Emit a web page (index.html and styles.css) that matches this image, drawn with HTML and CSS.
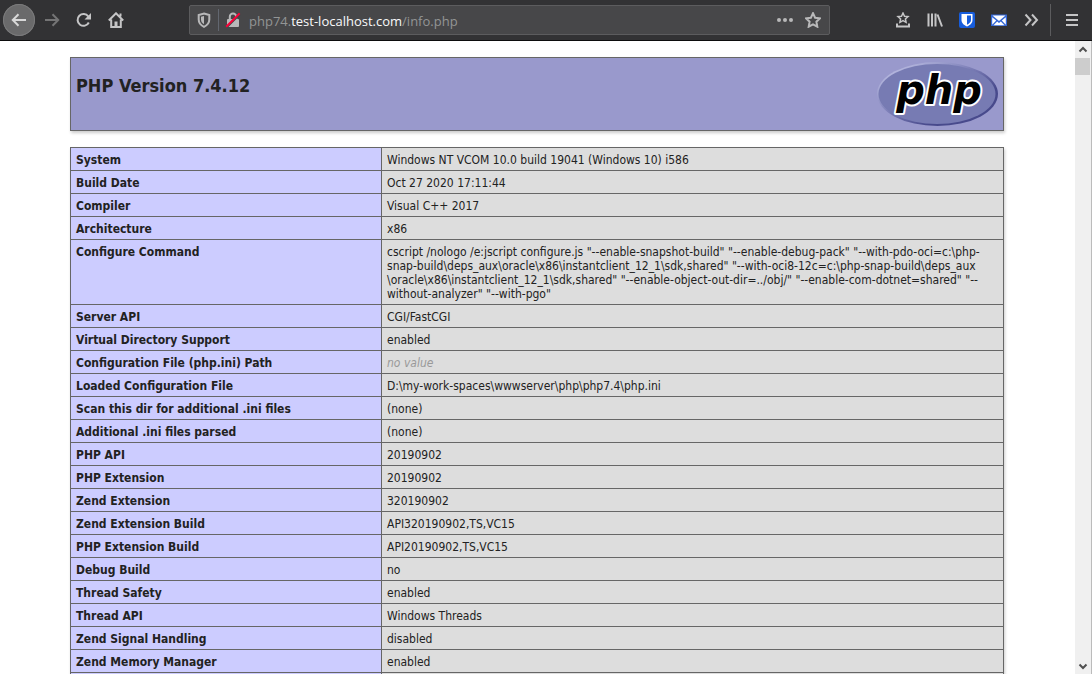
FILE: index.html
```html
<!DOCTYPE html>
<html lang="en">
<head>
<meta charset="utf-8">
<title>phpinfo()</title>
<link rel="stylesheet" href="styles.css">
</head>
<body>
<header class="toolbar">
  <nav class="nav-buttons">
    <button class="tool back" aria-label="Back"><svg viewBox="0 0 16 16"><path d="M15 8H2M7.500 2.300 1.800 8l5.700 5.700"/></svg></button>
    <button class="tool forward" aria-label="Forward"><svg viewBox="0 0 16 16"><path d="M1 8h13M8.500 2.300 14.200 8l-5.700 5.700"/></svg></button>
    <button class="tool" aria-label="Reload"><svg viewBox="0 0 16 16"><path d="M12.800 10.500A5.900 5.900 0 1 1 12.300 4.500"/><path class="solid" d="M15 1v6.500H8.500z"/></svg></button>
    <button class="tool" aria-label="Home"><svg viewBox="0 0 16 16"><path d="M.800 8.500 8 1.300l7.200 7.200M3.200 7.500V15h9.600V7.500M12.500 1.500v3"/><path class="solid" d="M6.500 15V9.500h3V15z"/></svg></button>
  </nav>
  <div class="urlbar">
    <button class="tool small" aria-label="Tracking protection"><svg viewBox="0 0 16 16"><path d="M8 1.500 13.300 3v4.500c0 3.600-2 5.700-5.300 7.300-3.300-1.600-5.300-3.700-5.300-7.300V3z"/><path class="solid" d="M8 4v8.300c-2-1.200-3-2.600-3-4.800V4.800z"/></svg></button>
    <span class="url-divider"></span>
    <button class="tool small" aria-label="Connection not secure"><svg viewBox="0 0 16 16"><path d="M4.800 8V4.800a3.200 3.200 0 0 1 6.400 0V8"/><rect class="solid" x="2" y="7" width="12" height="8" rx="1"/><path class="strike-gap" d="M2 15 15 2"/><path class="strike" d="M1.200 14.800 14.600 1.400"/></svg></button>
    <div class="url" role="textbox" aria-label="Address">php74.<span class="domain">test-localhost.com</span>/info.php</div>
    <button class="tool small" aria-label="Page actions"><svg viewBox="0 0 16 16"><g class="solid"><circle cx="2" cy="8" r="2"/><circle cx="8" cy="8" r="2"/><circle cx="14" cy="8" r="2"/></g></svg></button>
    <button class="tool star" aria-label="Bookmark this page"><svg viewBox="0 0 16 16"><path d="m8 1.200 2.100 4.500 4.900.6-3.600 3.400.9 5L8 12.300l-4.300 2.400.9-5L1 6.300l4.900-.6z"/></svg></button>
  </div>
  <div class="extras">
    <button class="tool" aria-label="Bookmarks"><svg viewBox="0 0 16 16"><path class="thin" d="m8 1 1.500 3.200 3.500.4-2.600 2.300.7 3.400L8 8.700l-3.100 1.600.7-3.400L3 4.600l3.500-.4z"/><path d="M2 11.500V14.500h12v-3"/></svg></button>
    <button class="tool" aria-label="Library"><svg viewBox="0 0 16 16"><path d="M1.500 1.500v13M5 1.500v13M8.500 1.500v13M10.500 2.500l4.500 12"/></svg></button>
    <button class="tool" aria-label="Password manager"><svg viewBox="0 0 16 16"><rect width="16" height="16" rx="2" fill="#175ddc"/><path class="white" d="M2.500 2h11v6c0 3.200-2.500 5-5.500 6.500C5 13 2.500 11.200 2.500 8z"/><path d="M8 3.500h4V8c0 2-1.500 3.300-4 4.800z" fill="#175ddc" class="plain"/></svg></button>
    <button class="tool" aria-label="Mail"><svg viewBox="0 0 16 16"><rect x="0" y="2.500" width="16" height="11.500" fill="#3367d6"/><path class="white" d="M1.500 3.500h13L8 9z"/><path class="white" d="m1.200 5.200 4 3.300-4 4.200zM14.800 5.200l-4 3.300 4 4.200z"/><path class="white" d="M2.500 13.300 6.200 9.500 8 11l1.800-1.500 3.700 3.800z"/></svg></button>
    <button class="tool" aria-label="More tools"><svg viewBox="0 0 16 16"><path d="m2.500 2.500 5 5.500-5 5.500M9 2.500l5 5.500-5 5.500"/></svg></button>
  </div>
  <div class="menu-box"><button class="tool" aria-label="Open menu"><svg viewBox="0 0 16 16"><path d="M2 3h12M2 8h12M2 13h12"/></svg></button></div>
</header>
<div class="viewport">
  <main class="page">
    <section class="banner">
      <h1>PHP Version 7.4.12</h1>
      <svg class="logo" viewBox="0 0 121 64" role="img" aria-label="PHP logo">
        <defs>
          <linearGradient id="rim" x1="0" y1="0" x2="1" y2="1"><stop offset="0.150" stop-color="#b2b4dc"/><stop offset="0.400" stop-color="#8486bd"/><stop offset="0.700" stop-color="#484a8c"/></linearGradient>
        </defs>
        <ellipse cx="60.500" cy="32" rx="60.500" ry="32" fill="url(#rim)"/>
        <ellipse cx="60" cy="32" rx="58.500" ry="30" fill="#777bb3"/>
        <text x="62" y="42" text-anchor="middle">php</text>
      </svg>
    </section>
    <table class="info">
      <tbody>
        <tr><th scope="row">System</th><td>Windows NT VCOM 10.0 build 19041 (Windows 10) i586</td></tr>
        <tr><th scope="row">Build Date</th><td>Oct 27 2020 17:11:44</td></tr>
        <tr><th scope="row">Compiler</th><td>Visual C++ 2017</td></tr>
        <tr><th scope="row">Architecture</th><td>x86</td></tr>
        <tr><th scope="row">Configure Command</th><td>cscript /nologo /e:jscript configure.js "--enable-snapshot-build" "--enable-debug-pack" "--with-pdo-oci=c:\php-<br>snap-build\deps_aux\oracle\x86\instantclient_12_1\sdk,shared" "--with-oci8-12c=c:\php-snap-build\deps_aux<br>\oracle\x86\instantclient_12_1\sdk,shared" "--enable-object-out-dir=../obj/" "--enable-com-dotnet=shared" "--<br>without-analyzer" "--with-pgo"</td></tr>
        <tr><th scope="row">Server API</th><td>CGI/FastCGI</td></tr>
        <tr><th scope="row">Virtual Directory Support</th><td>enabled</td></tr>
        <tr><th scope="row">Configuration File (php.ini) Path</th><td><i>no value</i></td></tr>
        <tr><th scope="row">Loaded Configuration File</th><td>D:\my-work-spaces\wwwserver\php\php7.4\php.ini</td></tr>
        <tr><th scope="row">Scan this dir for additional .ini files</th><td>(none)</td></tr>
        <tr><th scope="row">Additional .ini files parsed</th><td>(none)</td></tr>
        <tr><th scope="row">PHP API</th><td>20190902</td></tr>
        <tr><th scope="row">PHP Extension</th><td>20190902</td></tr>
        <tr><th scope="row">Zend Extension</th><td>320190902</td></tr>
        <tr><th scope="row">Zend Extension Build</th><td>API320190902,TS,VC15</td></tr>
        <tr><th scope="row">PHP Extension Build</th><td>API20190902,TS,VC15</td></tr>
        <tr><th scope="row">Debug Build</th><td>no</td></tr>
        <tr><th scope="row">Thread Safety</th><td>enabled</td></tr>
        <tr><th scope="row">Thread API</th><td>Windows Threads</td></tr>
        <tr><th scope="row">Zend Signal Handling</th><td>disabled</td></tr>
        <tr><th scope="row">Zend Memory Manager</th><td>enabled</td></tr>
        <tr><th scope="row"></th><td></td></tr>
      </tbody>
    </table>
  </main>
  <div class="scrollbar">
    <svg viewBox="0 0 16 16"><path d="m4.500 10 3.500-3.500 3.500 3.500"/></svg>
    <div class="thumb"></div>
    <svg class="down" viewBox="0 0 16 16"><path d="m4.500 7 3.500 3.500L11.500 7"/></svg>
  </div>
</div>
</body>
</html>
```
FILE: styles.css
```css
* { box-sizing: border-box; }
body {
  margin: 0;
  height: 100vh;
  display: flex;
  flex-direction: column;
  overflow: hidden;
  background: #fff;
  color: #222;
  font-family: "DejaVu Sans Condensed", "DejaVu Sans", sans-serif;
}
.toolbar {
  flex: none;
  display: flex;
  align-items: center;
  height: 41px;
  padding-left: 3px;
  background: #323234;
  border-bottom: 1px solid #0c0c0d;
}
.nav-buttons { display: flex; align-items: center; }
.tool {
  display: flex;
  align-items: center;
  justify-content: center;
  width: 32px;
  height: 32px;
  padding: 0;
  border: 0;
  background: none;
  color: #c5c5c6;
}
.tool svg {
  width: 16px;
  height: 16px;
  fill: none;
  stroke: currentColor;
  stroke-width: 2;
}
.tool .solid { fill: currentColor; stroke: none; }
.tool .thin { stroke-width: 1.5; }
.tool .white { fill: #fff; stroke: none; }
.tool .plain, .tool rect { stroke: none; }
.back { border-radius: 50%; background: #6a6a6b; box-shadow: inset 0 0 0 1px #7a7a7b; color: #d8d8d8; }
.forward { margin-left: 1px; color: #747475; }
.urlbar {
  flex: 1;
  display: flex;
  align-items: center;
  height: 30px;
  margin-left: 57px;
  padding-right: 2px;
  border: 1px solid #5c5c5e;
  border-radius: 2px;
  background: #474749;
}
.small { width: 28px; height: 28px; color: #b8b8b9; }
.star { width: 28px; height: 28px; color: #b8b8b9; }
.url-divider { width: 1px; height: 22px; background: #626770; }
.tool .strike-gap { stroke: #474749; stroke-width: 2; }
.tool .strike { stroke: #ff0039; }
.url {
  flex: 1;
  padding: 2px 0 0 2px;
  font: 13px/20px "Open Sans", "Noto Sans", sans-serif;
  color: #939595;
  white-space: nowrap;
}
.domain { color: #f9f9fa; }
.extras { display: flex; margin-left: 57px; }
.menu-box {
  display: flex;
  justify-content: center;
  width: 42px;
  margin-left: 3px;
  border-left: 1px solid #5c5c5e;
}
.viewport { flex: 1; display: flex; min-height: 0; }
.page { flex: 1; overflow: hidden; padding: 16px 71px 0 70px; }
.banner {
  display: flex;
  justify-content: space-between;
  align-items: flex-start;
  height: 74px;
  margin-bottom: 16px;
  padding: 4px 5px;
  border: 1px solid #666;
  background: #99c;
  box-shadow: 1px 2px 3px #ccc;
}
.banner h1 { margin: 13px 0 0; font-size: 18px; line-height: 22px; }
.logo { width: 121px; height: 64px; }
.logo text {
  font: italic bold 40px "DejaVu Sans", sans-serif;
  fill: #000;
  stroke: #fff;
  stroke-width: 4;
  stroke-linejoin: round;
  paint-order: stroke;
}
.info {
  width: 100%;
  border-collapse: collapse;
  table-layout: fixed;
  box-shadow: 1px 2px 3px #ccc;
  font-size: 12px;
  line-height: 14px;
}
.info th, .info td {
  height: 23px;
  padding: 5px 5px 3px;
  border: 1px solid #666;
  text-align: left;
  vertical-align: top;
}
.info th { width: 311px; background: #ccf; }
.info td { background: #ddd; white-space: nowrap; }
.info i { color: #999; }
.scrollbar {
  display: flex;
  flex-direction: column;
  width: 17px;
  background: #f0f0f0;
  border-right: 1px solid #bbb;
}
.scrollbar svg { width: 16px; height: 17px; fill: none; stroke: #505050; stroke-width: 2; }
.scrollbar .down { margin-top: auto; }
.thumb { height: 17px; width: 15px; background: #cdcdcd; }
```
